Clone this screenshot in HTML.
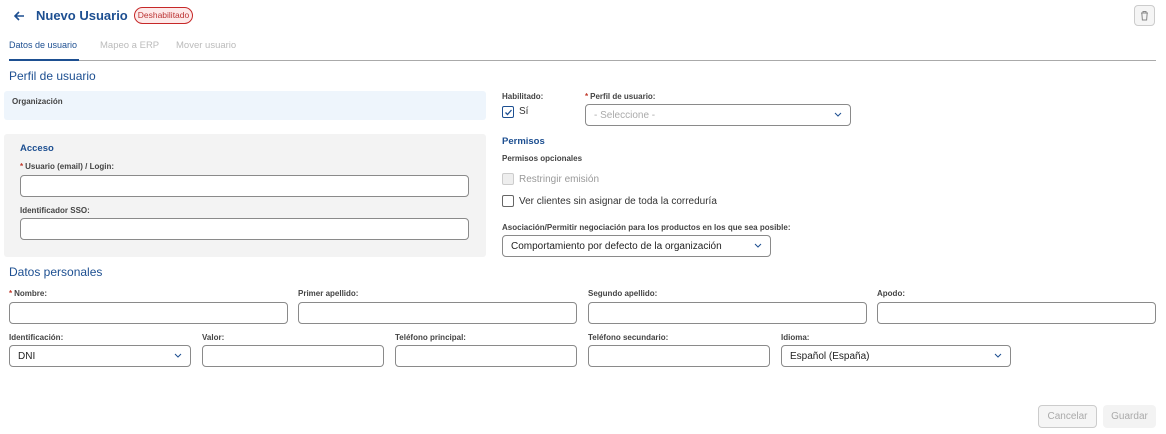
<!DOCTYPE html>
<html><head><meta charset="utf-8"><style>
*{box-sizing:border-box;margin:0;padding:0}
body{width:1166px;height:434px;background:#fff;font-family:"Liberation Sans",sans-serif;position:relative;overflow:hidden;color:#333}
.a{position:absolute}
.lbl{position:absolute;font-size:8px;font-weight:bold;color:#444;white-space:nowrap}
.req{color:#c0392b;margin-right:2px}
.inp{position:absolute;height:22px;border:1px solid #8a8a8a;border-radius:4px;background:#fff}
.sel{position:absolute;height:22px;border:1px solid #8a8a8a;border-radius:4px;background:#fff;font-size:10px;padding:5px 8px;color:#222}
.sel svg{position:absolute;right:8px;top:7px}
.h{position:absolute;color:#1d4f91;white-space:nowrap}
.cb{position:absolute;width:12px;height:12px;border:1px solid #666;border-radius:2px;background:#fff}
.t{position:absolute;font-size:10px;white-space:nowrap;color:#333}
</style></head><body>
<svg class="a" style="left:13px;top:10px" width="12" height="12" viewBox="0 0 12 12"><path d="M11 6H2M6 2L2 6l4 4" stroke="#1d4f91" stroke-width="1.6" fill="none"/></svg>
<div class="h" style="left:36px;top:8px;font-size:13px;font-weight:bold">Nuevo Usuario</div>
<div class="a" style="left:134px;top:7px;width:59px;height:17px;border:1px solid #c62828;border-radius:9px;background:#fdeaea;font-size:8.5px;color:#b33;text-align:center;line-height:15px">Deshabilitado</div>
<div class="a" style="left:1134px;top:5px;width:21px;height:21px;border:1px solid #ccc;border-radius:4px;background:#f5f5f5"></div>
<svg class="a" style="left:1139px;top:10px" width="11" height="11" viewBox="0 0 11 11"><path d="M2 3h7M4 3V1.5h3V3M2.8 3l.6 7h4.2l.6-7" stroke="#888" stroke-width="1" fill="none"/></svg>
<div class="t" style="left:9px;top:40px;color:#1d4f91;font-size:9px">Datos de usuario</div>
<div class="t" style="left:100px;top:40px;color:#bbb;font-size:9.5px">Mapeo a ERP</div>
<div class="t" style="left:176px;top:40px;color:#bbb;font-size:9.5px">Mover usuario</div>
<div class="a" style="left:9px;top:60px;width:1147px;height:1px;background:#aaa"></div>
<div class="a" style="left:9px;top:59px;width:70px;height:2px;background:#1d4f91"></div>
<div class="h" style="left:9px;top:69px;font-size:12px">Perfil de usuario</div>
<div class="a" style="left:4px;top:91px;width:482px;height:29px;background:#eef5fc;border-radius:3px"></div>
<div class="lbl" style="left:12px;top:97px">Organización</div>
<div class="a" style="left:4px;top:134px;width:482px;height:123px;background:#f3f3f3;border-radius:3px"></div>
<div class="h" style="left:20px;top:143px;font-size:9.5px;font-weight:bold">Acceso</div>
<div class="lbl" style="left:20px;top:162px"><span class="req">*</span>Usuario (email) / Login:</div>
<div class="inp" style="left:20px;top:175px;width:449px"></div>
<div class="lbl" style="left:20px;top:206px">Identificador SSO:</div>
<div class="inp" style="left:20px;top:218px;width:449px"></div>
<div class="lbl" style="left:502px;top:92px">Habilitado:</div>
<div class="cb" style="left:502px;top:106px;border-color:#1d4f91"></div>
<svg class="a" style="left:504px;top:108px" width="9" height="9" viewBox="0 0 9 9"><path d="M1.5 4.5l2 2 4-4.5" stroke="#1d4f91" stroke-width="1.3" fill="none"/></svg>
<div class="t" style="left:519px;top:106px">Sí</div>
<div class="lbl" style="left:585px;top:92px"><span class="req">*</span>Perfil de usuario:</div>
<div class="sel" style="left:585px;top:104px;width:266px;color:#aaa">- Seleccione -<svg width="8" height="6" viewBox="0 0 8 6"><path d="M1 1l3 3 3-3" stroke="#1d4f91" fill="none"/></svg></div>
<div class="h" style="left:502px;top:136px;font-size:9.5px;font-weight:bold">Permisos</div>
<div class="lbl" style="left:502px;top:154px">Permisos opcionales</div>
<div class="cb" style="left:502px;top:173px;border-color:#ccc;background:#eee"></div>
<div class="t" style="left:519px;top:174px;color:#999">Restringir emisión</div>
<div class="cb" style="left:502px;top:195px"></div>
<div class="t" style="left:519px;top:196px">Ver clientes sin asignar de toda la correduría</div>
<div class="lbl" style="left:502px;top:223px">Asociación/Permitir negociación para los productos en los que sea posible:</div>
<div class="sel" style="left:502px;top:235px;width:269px">Comportamiento por defecto de la organización<svg width="8" height="6" viewBox="0 0 8 6"><path d="M1 1l3 3 3-3" stroke="#1d4f91" fill="none"/></svg></div>
<div class="h" style="left:9px;top:265px;font-size:12px">Datos personales</div>
<div class="lbl" style="left:9px;top:289px"><span class="req">*</span>Nombre:</div>
<div class="lbl" style="left:298px;top:289px">Primer apellido:</div>
<div class="lbl" style="left:588px;top:289px">Segundo apellido:</div>
<div class="lbl" style="left:877px;top:289px">Apodo:</div>
<div class="inp" style="left:9px;top:302px;width:279px"></div>
<div class="inp" style="left:298px;top:302px;width:279px"></div>
<div class="inp" style="left:588px;top:302px;width:279px"></div>
<div class="inp" style="left:877px;top:302px;width:279px"></div>
<div class="lbl" style="left:9px;top:333px">Identificación:</div>
<div class="lbl" style="left:202px;top:333px">Valor:</div>
<div class="lbl" style="left:395px;top:333px">Teléfono principal:</div>
<div class="lbl" style="left:588px;top:333px">Teléfono secundario:</div>
<div class="lbl" style="left:781px;top:333px">Idioma:</div>
<div class="sel" style="left:9px;top:345px;width:182px">DNI<svg width="8" height="6" viewBox="0 0 8 6"><path d="M1 1l3 3 3-3" stroke="#1d4f91" fill="none"/></svg></div>
<div class="inp" style="left:202px;top:345px;width:182px"></div>
<div class="inp" style="left:395px;top:345px;width:182px"></div>
<div class="inp" style="left:588px;top:345px;width:182px"></div>
<div class="sel" style="left:781px;top:345px;width:230px">Español (España)<svg width="8" height="6" viewBox="0 0 8 6"><path d="M1 1l3 3 3-3" stroke="#1d4f91" fill="none"/></svg></div>
<div class="a" style="left:1038px;top:405px;width:59px;height:23px;border:1px solid #ccc;border-radius:4px;background:#f5f5f5;font-size:10px;color:#aaa;text-align:center;line-height:21px">Cancelar</div>
<div class="a" style="left:1103px;top:405px;width:53px;height:23px;border-radius:4px;background:#f3f3f3;font-size:10px;color:#aaa;text-align:center;line-height:23px">Guardar</div>
</body></html>
